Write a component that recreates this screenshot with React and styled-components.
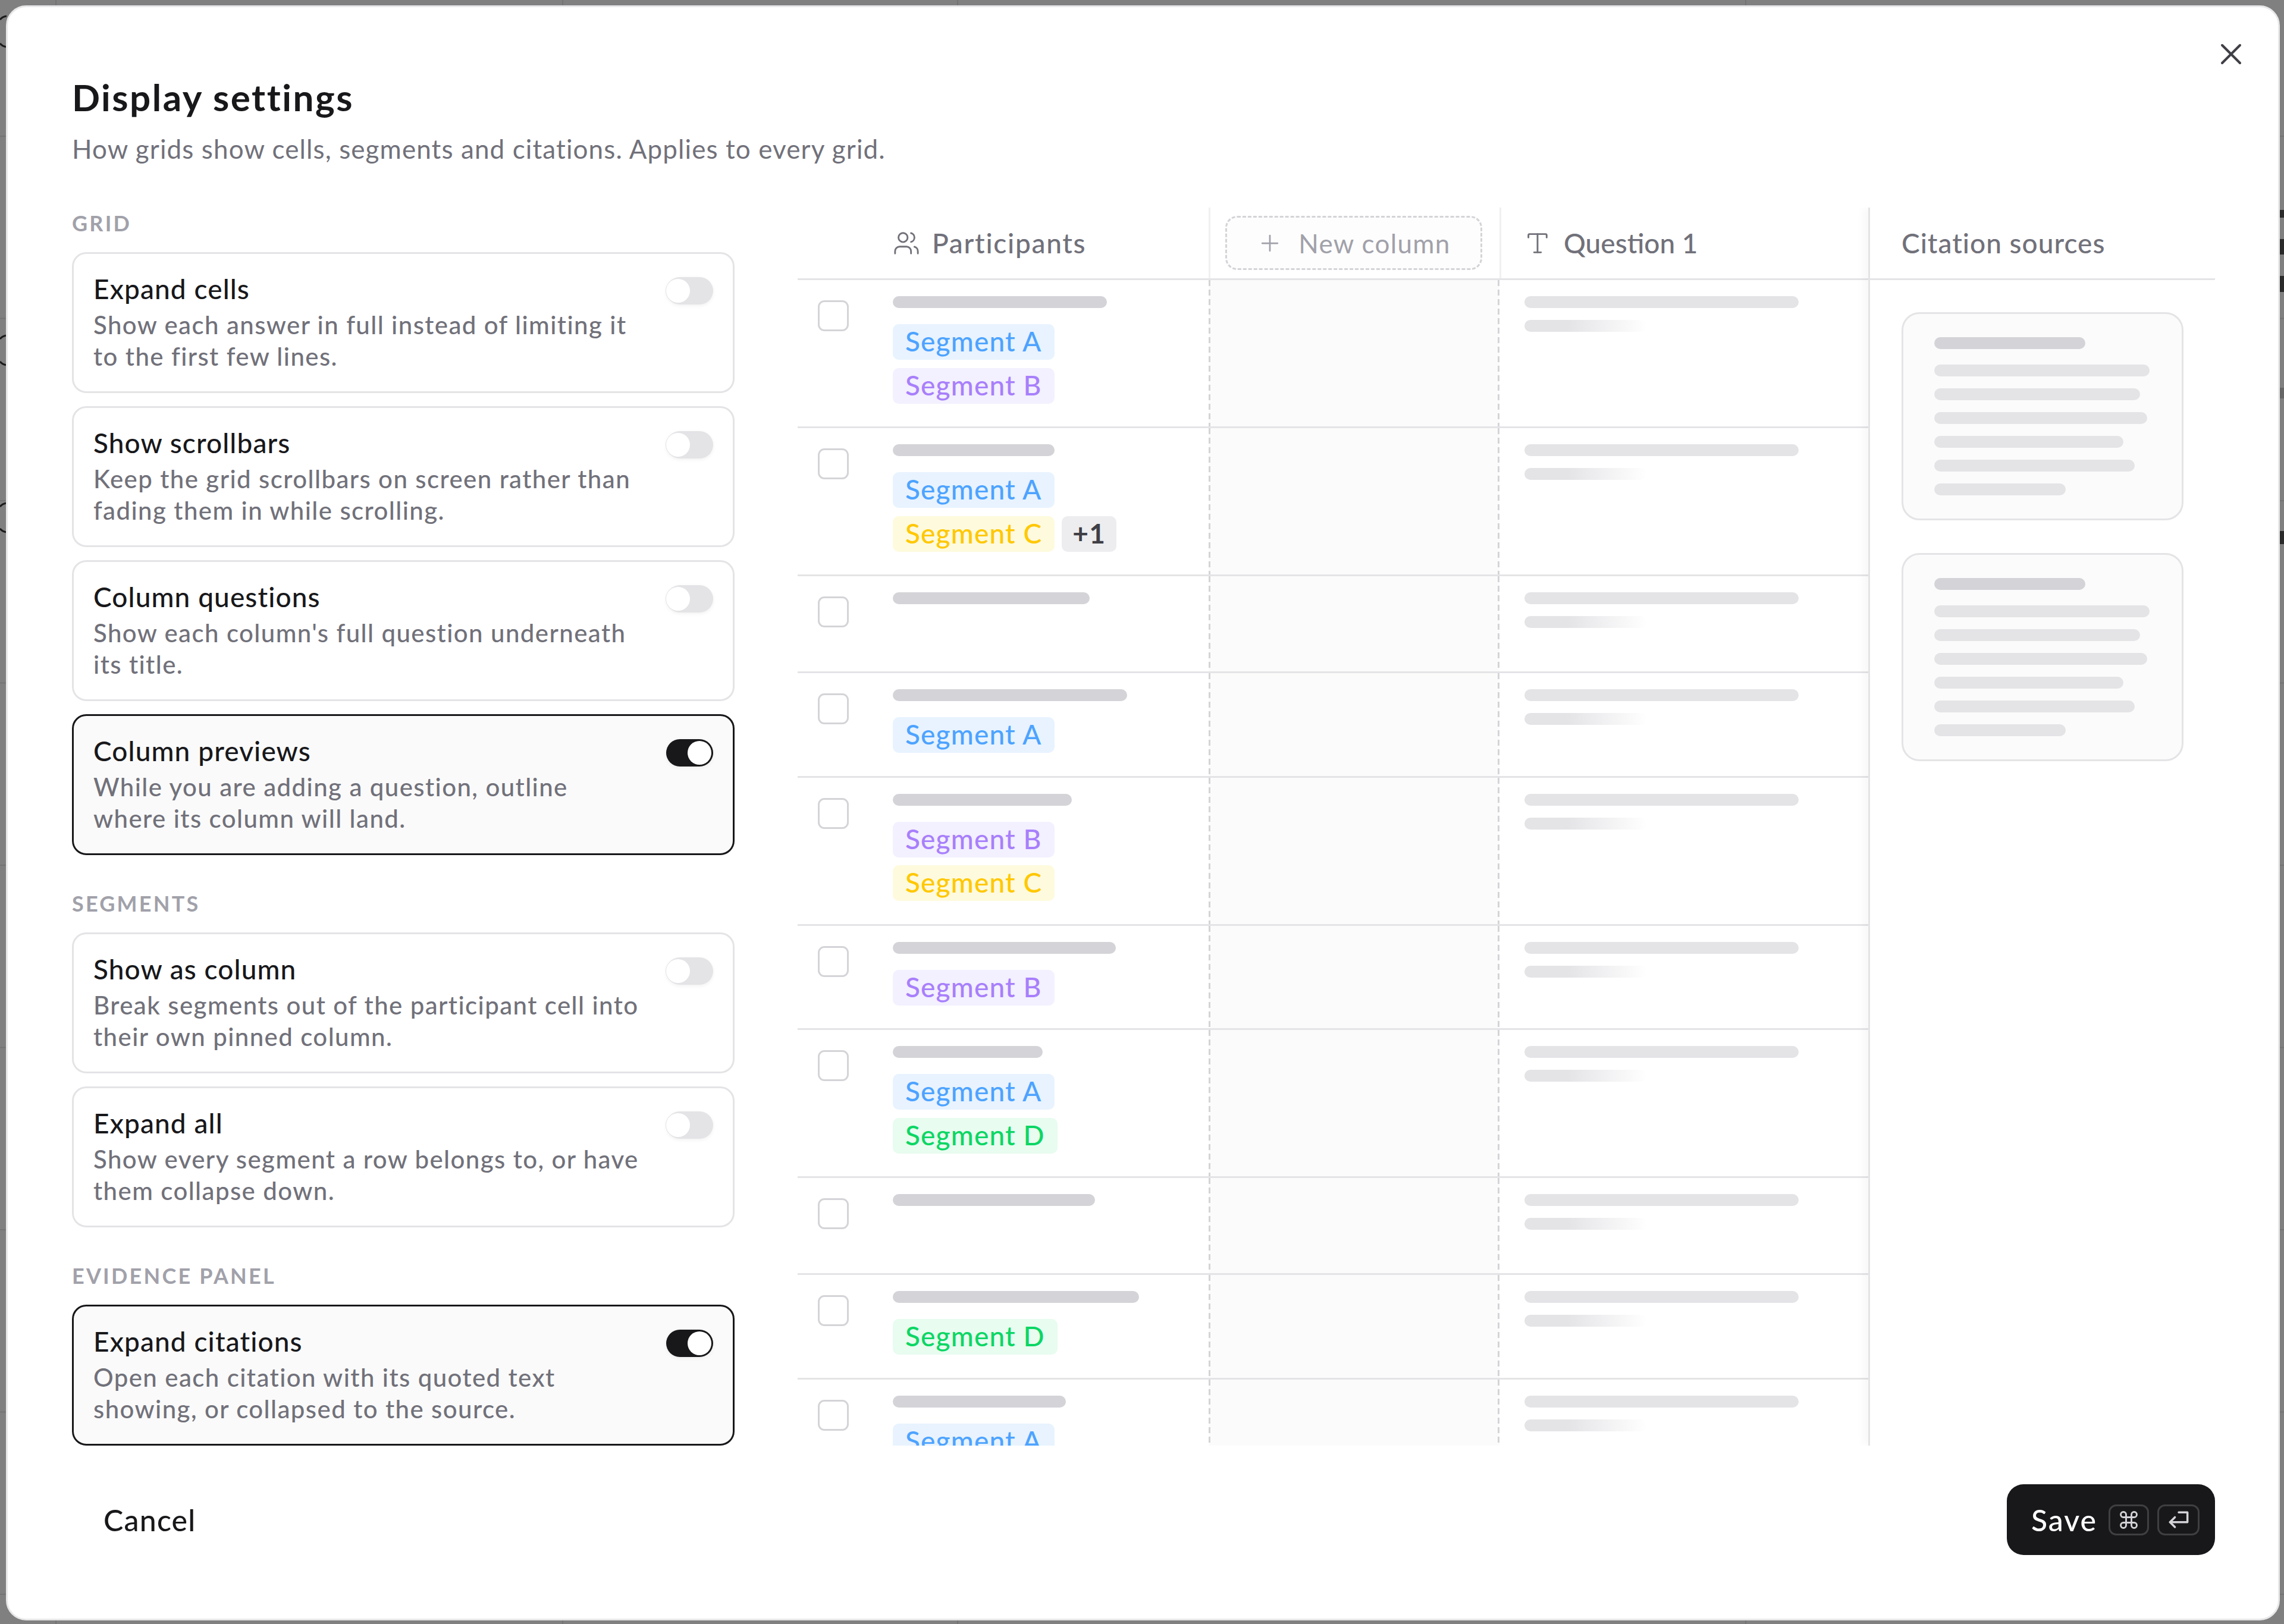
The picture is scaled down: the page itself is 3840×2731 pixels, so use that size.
import React from 'react';
import styled, { createGlobalStyle } from 'styled-components';
import { Users, Type, Plus, X, Command } from 'lucide-react';

const GlobalStyle = createGlobalStyle`
  html, body {
    margin: 0;
    padding: 0;
    background: #808080;
    font-family: Lato, "Noto Sans", sans-serif;
  }
  * { box-sizing: border-box; }
`;

// the grid page behind the scrim only shows in the thin strip around the modal
const Page = styled.div`
  position: relative;
  width: 3840px;
  height: 2731px;
  padding: 9px 7px 6px 10px;
  overflow: hidden;
  background-color: #808080;
  background-image:
    linear-gradient(#747474, #747474),
    linear-gradient(#747474, #747474),
    linear-gradient(#747474, #747474),
    linear-gradient(#747474, #747474),
    linear-gradient(#747474 2px, transparent 2px);
  background-size: 2px 100%, 2px 100%, 2px 100%, 2px 100%, 100% 306.5px;
  background-position: 93px 0, 945px 0, 1609px 0, 2934px 0, 0 228px;
  background-repeat: no-repeat, no-repeat, no-repeat, no-repeat, repeat-y;
`;

const BehindMarks = styled.svg`
  position: absolute;
  top: 0;
  left: 0;
  width: 3840px;
  height: 1000px;
`;

const Modal = styled.div`
  position: relative;
  display: flex;
  flex-direction: column;
  height: 100%;
  background: #ffffff;
  border: 3px solid #e8e8ea;
  border-radius: 34px;
  padding: 0 106px 0 108px;
`;

const CloseButton = styled.button`
  position: absolute;
  top: 49px;
  right: 49px;
  width: 60px;
  height: 60px;
  padding: 0;
  border: 0;
  background: none;
  color: #3f3f46;
  display: flex;
`;

const Title = styled.h1`
  margin: 116px 0 0;
  font-size: 62px;
  line-height: 70px;
  font-weight: 700;
  letter-spacing: 2.5px;
  color: #18181b;
`;

const Subtitle = styled.p`
  margin: 22px 0 0;
  font-size: 44px;
  line-height: 60px;
  letter-spacing: 1.1px;
  color: #71717a;
`;

const Body = styled.div`
  display: flex;
  gap: 106px;
  height: 2082px;
  margin-top: 69px;
  overflow: hidden;
`;

const Settings = styled.div`
  flex: 0 0 1114px;
  padding-top: 4px;
`;

const SectionLabel = styled.div`
  height: 44px;
  margin-top: ${p => (p.$first ? 0 : 59)}px;
  margin-bottom: 27px;
  font-size: 36px;
  line-height: 44px;
  font-weight: 700;
  letter-spacing: 3.2px;
  color: #a1a1aa;
`;

const CardStack = styled.div`
  display: flex;
  flex-direction: column;
  gap: 22px;
`;

const Card = styled.div`
  display: flex;
  justify-content: space-between;
  align-items: flex-start;
  height: 237px;
  padding: 32px 33px 0 33px;
  border: 3.5px solid ${p => (p.$on ? '#18181b' : '#e4e4e7')};
  border-radius: 24px;
  background: ${p => (p.$on ? '#fafafa' : '#ffffff')};
`;

const CardText = styled.div`
  width: 950px;
`;

const CardTitle = styled.div`
  font-size: 46px;
  line-height: 54px;
  font-weight: 500;
  letter-spacing: 1.1px;
  color: #18181b;
`;

const CardDesc = styled.div`
  margin-top: 7px;
  font-size: 42px;
  line-height: 53px;
  font-weight: 500;
  letter-spacing: 1.4px;
  color: #71717a;
`;

const Toggle = styled.div`
  position: relative;
  flex: none;
  width: 79px;
  height: 46px;
  margin-top: 7px;
  border-radius: 23px;
  background: ${p => (p.$on ? '#18181b' : '#e4e4e7')};
  box-shadow: 0 2px 6px rgba(0, 0, 0, 0.06);
`;

const Knob = styled.span`
  position: absolute;
  top: 3px;
  left: ${p => (p.$on ? 36 : 0)}px;
  width: 40px;
  height: 40px;
  border-radius: 50%;
  background: #ffffff;
  box-shadow: ${p => (p.$on ? 'none' : '0 0 0 1px #e4e4e7')};
`;

const TableArea = styled.div`
  flex: 1;
  display: flex;
  min-width: 0;
`;

const GridArea = styled.div`
  flex: 0 0 1800px;
`;

const columns = '691px 489px 620px';

const HeadRow = styled.div`
  display: grid;
  grid-template-columns: ${columns};
  height: 122px;
  border-bottom: 3px solid #e4e4e7;
`;

const HeadCell = styled.div`
  display: flex;
  align-items: center;
  gap: ${p => p.$gap ?? 22}px;
  padding-left: ${p => p.$pad}px;
  border-left: ${p => (p.$line ? '3px solid #f0f0f2' : '0')};
  font-size: 46px;
  font-weight: 500;
  letter-spacing: ${p => p.$ls ?? 0}px;
  color: #71717a;
`;

const NewColumn = styled.div`
  display: flex;
  align-items: center;
  justify-content: center;
  gap: 26px;
  width: 432px;
  height: 91px;
  margin-left: 25px;
  border: 3px dashed #d4d4d8;
  border-radius: 20px;
  background: #fdfdfd;
  font-size: 44px;
  font-weight: 400;
  letter-spacing: 1.35px;
  color: #a1a1aa;
`;

const Row = styled.div`
  display: grid;
  grid-template-columns: ${columns};
  min-height: 163px;
  border-bottom: 3px solid #e4e4e7;
`;

const ParticipantCell = styled.div`
  display: flex;
  padding: 27px 0 38.5px 34px;
`;

const Checkbox = styled.span`
  flex: none;
  width: 52px;
  height: 52px;
  margin: 7px 74px 0 0;
  border: 3.5px solid #d4d4d8;
  border-radius: 11px;
`;

const Bar = styled.div`
  width: ${p => p.$w}px;
  height: 20px;
  border-radius: 10px;
  background: ${p => p.$bg || '#e4e4e7'};
`;

const FadeBar = styled(Bar)`
  margin-top: 20px;
  background: linear-gradient(90deg, #e4e4e7 0%, #e4e4e7 35%, #ffffff 100%);
`;

const ChipStack = styled.div`
  display: flex;
  flex-direction: column;
  gap: 13.5px;
  margin-top: 27px;
`;

const ChipRow = styled.div`
  display: flex;
  gap: 12px;
`;

const Chip = styled.span`
  display: flex;
  align-items: center;
  height: 60px;
  padding: 0 ${p => p.$pad ?? 21}px 3px;
  border-radius: 10px;
  font-size: 46px;
  font-weight: ${p => p.$weight ?? 500};
  letter-spacing: 1.15px;
  white-space: nowrap;
  color: ${p => p.$fg};
  background: ${p => p.$bg};
`;

// dashes are longer than what a css dashed border gives at this width
const GapCell = styled.div`
  background-color: #fbfbfb;
  background-image:
    repeating-linear-gradient(180deg, #d4d4d8 0 10px, transparent 10px 16px),
    repeating-linear-gradient(180deg, #d4d4d8 0 10px, transparent 10px 16px);
  background-size: 3px 100%;
  background-position: 0 0, 100% 0;
  background-repeat: no-repeat;
`;

const QuestionCell = styled.div`
  padding: 27px 0 0 42px;
`;

const CitationPanel = styled.div`
  position: relative;
  flex: 0 0 583px;
  border-left: 3px solid #e4e4e7;
  box-shadow: -8px 0 14px rgba(0, 0, 0, 0.03);
  background: #ffffff;
`;

const PanelHead = styled.div`
  display: flex;
  align-items: center;
  height: 122px;
  padding-left: 53px;
  border-bottom: 3px solid #e4e4e7;
  font-size: 46px;
  font-weight: 500;
  letter-spacing: 1px;
  color: #71717a;
`;

const PanelCards = styled.div`
  display: flex;
  flex-direction: column;
  gap: 55px;
  padding: 54px 0 0 53px;
`;

const SourceCard = styled.div`
  display: flex;
  flex-direction: column;
  gap: 20px;
  width: 474px;
  height: 350px;
  padding: 39px 0 0 52px;
  border: 3.5px solid #e4e4e7;
  border-radius: 30px;
  background: #fbfbfb;
`;

const SourceTitle = styled(Bar)`
  margin-bottom: 6px;
`;

const Footer = styled.div`
  flex: 1;
  display: flex;
  justify-content: space-between;
  align-items: center;
  padding-bottom: 42px;
`;

const CancelButton = styled.button`
  padding: 0 53px;
  border: 0;
  background: none;
  font: 500 50px Lato, sans-serif;
  letter-spacing: 1.2px;
  color: #18181b;
`;

const SaveButton = styled.button`
  display: flex;
  align-items: center;
  height: 119px;
  width: 350px;
  padding: 0 0 0 41px;
  border: 0;
  border-radius: 28px;
  background: #18181b;
  font: 500 50px Lato, sans-serif;
  letter-spacing: 2px;
  color: #ffffff;
`;

const SaveLabel = styled.span`
  width: 109px;
`;

const Kbd = styled.span`
  display: flex;
  align-items: center;
  justify-content: center;
  width: ${p => p.$w}px;
  height: 52px;
  margin-left: ${p => p.$gap}px;
  border: 3px solid #3f3f42;
  border-radius: 13px;
  color: #d4d4d8;
`;

const settings = [
  {
    label: 'GRID',
    items: [
      ['Expand cells', ['Show each answer in full instead of limiting it', 'to the first few lines.']],
      ['Show scrollbars', ['Keep the grid scrollbars on screen rather than', 'fading them in while scrolling.']],
      ['Column questions', ["Show each column's full question underneath", 'its title.']],
      ['Column previews', ['While you are adding a question, outline', 'where its column will land.'], true],
    ],
  },
  {
    label: 'SEGMENTS',
    items: [
      ['Show as column', ['Break segments out of the participant cell into', 'their own pinned column.']],
      ['Expand all', ['Show every segment a row belongs to, or have', 'them collapse down.']],
    ],
  },
  {
    label: 'EVIDENCE PANEL',
    items: [
      ['Expand citations', ['Open each citation with its quoted text', 'showing, or collapsed to the source.'], true],
    ],
  },
];

const chipColors = {
  A: { fg: '#4da3ff', bg: '#e8f3ff' },
  B: { fg: '#a87ffb', bg: '#f3f0ff' },
  C: { fg: '#ffc800', bg: '#fefadd' },
  D: { fg: '#0cd664', bg: '#e8fcf0' },
};

const rows = [
  { w: 360, chips: [['A'], ['B']] },
  { w: 272, chips: [['A'], ['C', '+1']] },
  { w: 331, chips: [] },
  { w: 394, chips: [['A']] },
  { w: 301, chips: [['B'], ['C']] },
  { w: 375, chips: [['B']] },
  { w: 252, chips: [['A'], ['D']] },
  { w: 340, chips: [] },
  { w: 414, chips: [['D']] },
  { w: 291, chips: [['A']] },
];

const sourceLines = [362, 346, 358, 318, 337, 221];

function Source() {
  return (
    <SourceCard>
      <SourceTitle $w={254} $bg="#d4d4d8" />
      {sourceLines.map((w, i) => (
        <Bar key={i} $w={w} />
      ))}
    </SourceCard>
  );
}

function ReturnIcon() {
  return (
    <svg width="44" height="44" viewBox="0 0 24 24" fill="none" stroke="currentColor" strokeWidth="1.9" strokeLinecap="round" strokeLinejoin="round">
      <path d="M12 5h8v9H4" />
      <path d="m8.5 9.5-4.5 4.5 4.5 4.5" />
    </svg>
  );
}

export default function App() {
  return (
    <Page>
      <GlobalStyle />
      <BehindMarks viewBox="0 0 3840 1000" fill="none" stroke="#1a1a1a" strokeWidth="3">
        <path d="M11 27Q4 28 0 33M11 79Q4 78 0 73" />
        <path d="M11 564Q4 565 0 570M11 614Q4 613 0 608" />
        <path d="M11 846Q4 847 0 852M11 895Q4 894 0 889" />
        <path d="M3832 353h8v13h-8zM3832 402h8v26h-8zM3832 464h8v27h-8zM3832 893h8v22h-8z" fill="#2a2a2a" stroke="none" />
        <path d="M3832 652h8v18h-8z" fill="#666" stroke="none" />
      </BehindMarks>
      <Modal>
        <CloseButton>
          <X size={60} strokeWidth={1.6} />
        </CloseButton>
        <Title>Display settings</Title>
        <Subtitle>How grids show cells, segments and citations. Applies to every grid.</Subtitle>
        <Body>
          <Settings>
            {settings.map((section, s) => (
              <div key={section.label}>
                <SectionLabel $first={s === 0}>{section.label}</SectionLabel>
                <CardStack>
                  {section.items.map(([title, desc, on]) => (
                    <Card key={title} $on={on}>
                      <CardText>
                        <CardTitle>{title}</CardTitle>
                        <CardDesc>
                          {desc[0]}
                          <br />
                          {desc[1]}
                        </CardDesc>
                      </CardText>
                      <Toggle $on={on}>
                        <Knob $on={on} />
                      </Toggle>
                    </Card>
                  ))}
                </CardStack>
              </div>
            ))}
          </Settings>
          <TableArea>
            <GridArea>
              <HeadRow>
                <HeadCell $pad={160} $ls={1.7} $gap={20}>
                  <Users size={46} strokeWidth={1.5} />
                  Participants
                </HeadCell>
                <HeadCell $line>
                  <NewColumn>
                    <Plus size={44} strokeWidth={1.5} />
                    New column
                  </NewColumn>
                </HeadCell>
                <HeadCell $line $pad={38} $gap={21}>
                  <Type size={46} strokeWidth={1.5} />
                  Question 1
                </HeadCell>
              </HeadRow>
              {rows.map((row, i) => (
                <Row key={i}>
                  <ParticipantCell>
                    <Checkbox />
                    <div>
                      <Bar $w={row.w} $bg="#d4d4d8" />
                      {row.chips.length > 0 && (
                        <ChipStack>
                          {row.chips.map(([seg, extra]) => (
                            <ChipRow key={seg}>
                              <Chip $fg={chipColors[seg].fg} $bg={chipColors[seg].bg}>
                                Segment {seg}
                              </Chip>
                              {extra && (
                                <Chip $fg="#3f3f46" $bg="#ededef" $pad={18} $weight={700}>
                                  {extra}
                                </Chip>
                              )}
                            </ChipRow>
                          ))}
                        </ChipStack>
                      )}
                    </div>
                  </ParticipantCell>
                  <GapCell />
                  <QuestionCell>
                    <Bar $w={461} />
                    <FadeBar $w={206} />
                  </QuestionCell>
                </Row>
              ))}
            </GridArea>
            <CitationPanel>
              <PanelHead>Citation sources</PanelHead>
              <PanelCards>
                <Source />
                <Source />
              </PanelCards>
            </CitationPanel>
          </TableArea>
        </Body>
        <Footer>
          <CancelButton>Cancel</CancelButton>
          <SaveButton>
            <SaveLabel>Save</SaveLabel>
            <Kbd $w={68} $gap={21}>
              <Command size={36} strokeWidth={1.9} />
            </Kbd>
            <Kbd $w={71} $gap={14}>
              <ReturnIcon />
            </Kbd>
          </SaveButton>
        </Footer>
      </Modal>
    </Page>
  );
}
